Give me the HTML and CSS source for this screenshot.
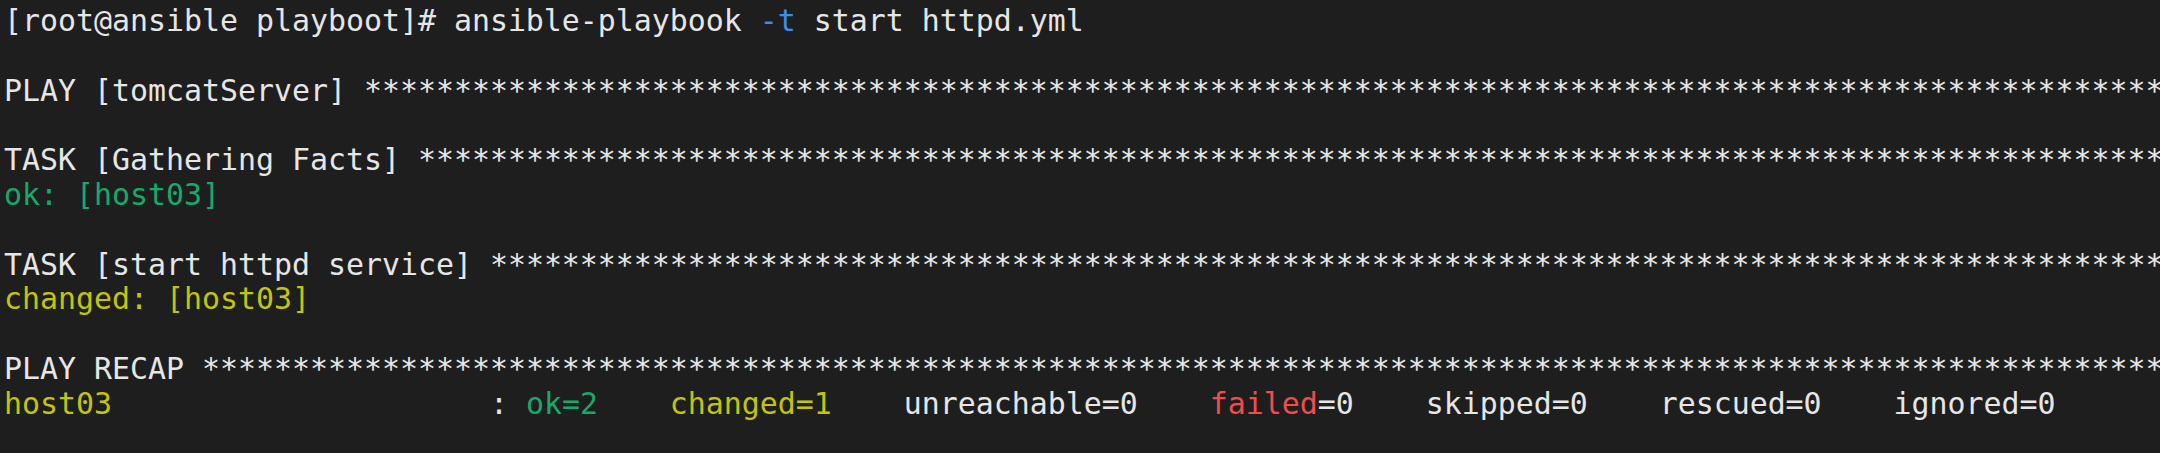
FILE: index.html
```html
<!DOCTYPE html>
<html>
<head>
<meta charset="utf-8">
<link rel="stylesheet" href="styles.css">
</head>
<body>
<div class="term">
<div class="line">[root@ansible playboot]# ansible-playbook <span class="blue">-t</span> start httpd.yml</div>
<div class="line"> </div>
<div class="line">PLAY [tomcatServer] <span class="stars">****************************************************************************************************</span></div>
<div class="line"> </div>
<div class="line">TASK [Gathering Facts] <span class="stars">*************************************************************************************************</span></div>
<div class="line green">ok: [host03]</div>
<div class="line"> </div>
<div class="line">TASK [start httpd service] <span class="stars">*********************************************************************************************</span></div>
<div class="line yellow">changed: [host03]</div>
<div class="line"> </div>
<div class="line">PLAY RECAP <span class="stars">*************************************************************************************************************</span></div>
<div class="line"><span class="yellow">host03</span>                     : <span class="green">ok=2</span>    <span class="yellow">changed=1</span>    unreachable=0    <span class="red">failed</span>=0    skipped=0    rescued=0    ignored=0   </div>
</div>
</body>
</html>
```
FILE: styles.css
```css
html, body {
  margin: 0;
  padding: 0;
  background: #1e1e1e;
}
body {
  width: 2160px;
  height: 453px;
  overflow: hidden;
}
.term {
  padding: 4px 0 0 4px;
  font-family: "DejaVu Sans Mono", monospace;
  font-size: 29.9px;
  line-height: 34.8px;
  color: #e6e6e6;
}
.line {
  white-space: pre;
  overflow: hidden;
  height: 34.8px;
}
.blue { color: #3b8eea; }
.green { color: #17a86b; }
.yellow { color: #c4c40e; }
.red { color: #f14c4c; }
```
